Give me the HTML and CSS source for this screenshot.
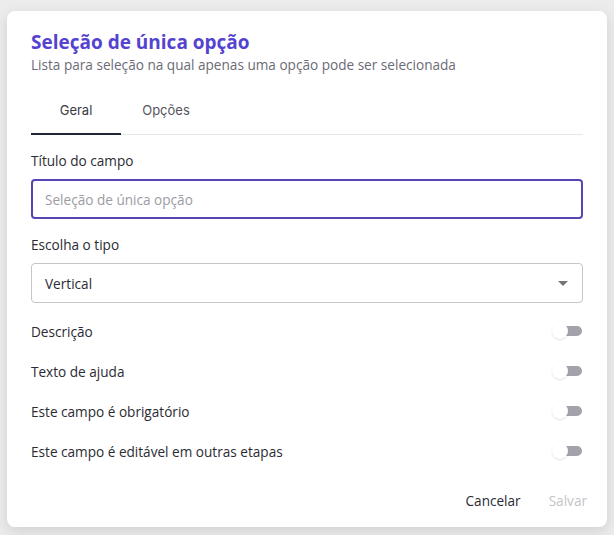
FILE: index.html
```html
<!DOCTYPE html>
<html lang="pt-BR">
<head>
  <meta charset="UTF-8" />
  <title>Seleção de única opção</title>
  <link rel="stylesheet" href="styles.css">
</head>
<body>
  <div class="dialog">
    <header class="dialog-head">
      <h1>Seleção de única opção</h1>
      <p>Lista para seleção na qual apenas uma opção pode ser selecionada</p>
    </header>

    <nav class="tabs">
      <div class="tab active">Geral</div>
      <div class="tab">Opções</div>
    </nav>

    <div class="field">
      <label>Título do campo</label>
      <div class="input focused">
        <span class="placeholder">Seleção de única opção</span>
      </div>
    </div>

    <div class="field last">
      <label>Escolha o tipo</label>
      <div class="input select">
        <span>Vertical</span>
        <svg class="caret" width="10" height="5" viewBox="0 0 10 5"><path d="M0 0h10L5 5z" fill="#757575"/></svg>
      </div>
    </div>

    <div class="switch-row">
      <span>Descrição</span>
      <span class="switch"><span class="track"></span><span class="thumb"></span></span>
    </div>
    <div class="switch-row">
      <span>Texto de ajuda</span>
      <span class="switch"><span class="track"></span><span class="thumb"></span></span>
    </div>
    <div class="switch-row">
      <span>Este campo é obrigatório</span>
      <span class="switch"><span class="track"></span><span class="thumb"></span></span>
    </div>
    <div class="switch-row">
      <span>Este campo é editável em outras etapas</span>
      <span class="switch"><span class="track"></span><span class="thumb"></span></span>
    </div>

    <footer class="actions">
      <button class="btn">Cancelar</button>
      <button class="btn disabled">Salvar</button>
    </footer>
  </div>
</body>
</html>
```

FILE: styles.css
```css
body {
  margin: 0;
  padding: 11px 7px 8px;
  font-family: 'Open Sans', sans-serif;
  background-color: #ececec;
  color: #2b2b33;
}

.dialog {
  background-color: #ffffff;
  border-radius: 8px;
  box-shadow: 0 4px 14px rgba(0, 0, 0, 0.12);
  padding: 18px 24px 9px;
  height: 516px;
  box-sizing: border-box;
  display: flex;
  flex-direction: column;
}

.dialog-head h1 {
  margin: 0;
  font-size: 19px;
  font-weight: 700;
  color: #5443d1;
  line-height: 26px;
}

.dialog-head p {
  margin: 0;
  font-size: 13.6px;
  color: #6b6b75;
  line-height: 20px;
}

.tabs {
  display: flex;
  margin-top: 21px;
  border-bottom: 1px solid #e6e8ec;
  margin-bottom: 16px;
}

.tab {
  width: 90px;
  text-align: center;
  font-family: 'Inter', sans-serif;
  font-size: 13px;
  color: #55555e;
  padding: 6px 0 15px;
  margin-bottom: -1px;
}

.tab.active {
  color: #3a3a44;
  border-bottom: 2px solid #1f2535;
}

.field {
  margin-bottom: 16px;
}

.field.last {
  margin-bottom: 8px;
}

.field label {
  display: block;
  font-size: 13.6px;
  color: #2b2b33;
  line-height: 20px;
  margin-bottom: 8px;
}

.input {
  height: 40px;
  box-sizing: border-box;
  border: 1px solid #c6c6c6;
  border-radius: 4px;
  padding: 0 13px;
  display: flex;
  align-items: center;
  font-size: 13.6px;
}

.input.focused {
  border: 2px solid #5546b3;
  padding: 0 12px;
}

.placeholder {
  color: #9c9ca4;
}

.select {
  justify-content: space-between;
  padding-right: 14px;
  color: #2b2b33;
}

.switch-row {
  display: flex;
  justify-content: space-between;
  align-items: center;
  font-size: 13.6px;
  height: 40px;
}

.switch {
  position: relative;
  width: 30px;
  height: 16px;
  margin-right: 1px;
}

.track {
  position: absolute;
  right: 0;
  top: 3px;
  width: 24px;
  height: 10px;
  border-radius: 5px;
  background-color: #a3a3ab;
}

.thumb {
  position: absolute;
  left: 0;
  top: 0;
  width: 16px;
  height: 16px;
  border-radius: 50%;
  background-color: #ffffff;
  box-shadow: 0 1px 2px rgba(0, 0, 0, 0.12);
}

.actions {
  margin-top: auto;
  margin-right: -4px;
  display: flex;
  justify-content: flex-end;
  gap: 4px;
}

.btn {
  background: none;
  border: none;
  font-family: 'Open Sans', sans-serif;
  font-size: 13.6px;
  color: #2b2b33;
  padding: 8px 12px;
}

.btn.disabled {
  color: #c4c4c8;
  padding-right: 0;
}
```
